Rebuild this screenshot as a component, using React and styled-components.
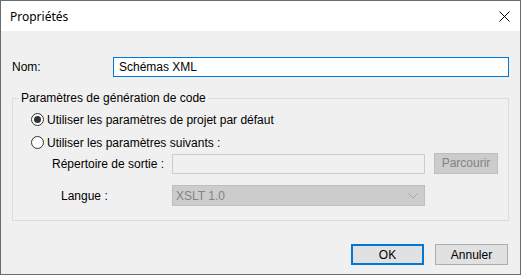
import React from 'react'
import styled, { createGlobalStyle } from 'styled-components'

const GlobalStyle = createGlobalStyle`
    html, body {
        margin: 0;
        padding: 0;
        background: #f0f0f0;
    }
    * {
        box-sizing: border-box;
    }
`

const Fenetre = styled.div`
    width: 521px;
    height: 275px;
    border: 1px solid #6b6b6b;
    background: #f0f0f0;
    display: flex;
    flex-direction: column;
    font-family: "Liberation Sans", Arial, sans-serif;
    font-size: 12px;
    color: #000;
`

const BarreTitre = styled.div`
    height: 30px;
    background: #fff;
    display: flex;
    align-items: center;
    justify-content: space-between;
    padding: 0 10px 0 9px;
    flex-shrink: 0;
`

const Titre = styled.span`
    font-family: "Noto Sans", "Open Sans", sans-serif;
    font-size: 12px;
`

const Corps = styled.div`
    flex: 1;
    display: flex;
    flex-direction: column;
    padding: 26px 11px 0 11px;
`

const LigneNom = styled.div`
    display: flex;
    align-items: center;
    height: 20px;
`

const Etiquette = styled.label`
    width: ${(p) => p.largeur || 101}px;
    padding-left: ${(p) => p.retrait || 0}px;
    flex-shrink: 0;
`

const Champ = styled.input`
    height: ${(p) => p.hauteur || 20}px;
    flex: ${(p) => (p.largeur ? 'none' : 1)};
    width: ${(p) => (p.largeur ? p.largeur + 'px' : 'auto')};
    border: 1px solid ${(p) => (p.actif ? '#0078d7' : '#cccccc')};
    background: ${(p) => (p.actif ? '#fff' : '#f0f0f0')};
    font: inherit;
    padding: 0 5px;
    outline: none;
    color: #000;
`

const Groupe = styled.fieldset`
    margin: 14px 0 0 0;
    padding: 0;
    border: 1px solid #dcdcdc;
    height: 130px;
`

const Legende = styled.legend`
    padding: 0 2px;
    margin-left: 6px;
`

const Contenu = styled.div`
    padding: 8px 0 0 18px;
`

const Choix = styled.label`
    display: flex;
    align-items: center;
    height: 13px;
    margin-top: ${(p) => p.haut || 0}px;
    gap: 3px;
`

const Rond = styled.span`
    width: 13px;
    height: 13px;
    border-radius: 50%;
    border: 1px solid #333;
    background: #fff;
    display: flex;
    align-items: center;
    justify-content: center;

    &::after {
        content: '';
        width: 7px;
        height: 7px;
        border-radius: 50%;
        background: ${(p) => (p.coche ? '#333' : 'transparent')};
    }
`

const LigneChamp = styled.div`
    display: flex;
    align-items: center;
    margin-top: ${(p) => p.haut || 0}px;
    height: ${(p) => p.hauteur || 20}px;
`

const Bouton = styled.button`
    width: 73px;
    height: 21px;
    font: inherit;
    padding: 0;
    background: ${(p) => (p.inactif ? '#cccccc' : '#e1e1e1')};
    color: ${(p) => (p.inactif ? '#838383' : '#000')};
    border: ${(p) => (p.defaut ? '2px solid #0078d7' : p.inactif ? '1px solid #bfbfbf' : '1px solid #adadad')};
`

const BoutonParcourir = styled(Bouton)`
    width: 64px;
    margin-left: 9px;
    margin-top: -2px;
`

const Liste = styled.div`
    width: 253px;
    height: 21px;
    background: #cccccc;
    border: 1px solid #bfbfbf;
    color: #838383;
    display: flex;
    align-items: center;
    justify-content: space-between;
    padding: 0 6px 0 3px;
`

const PiedBoutons = styled.div`
    display: flex;
    justify-content: flex-end;
    gap: 11px;
    margin-top: 23px;
    padding-right: 1px;
`

export default function App() {
    return (
        <>
            <GlobalStyle />
            <Fenetre>
                <BarreTitre>
                    <Titre>Propriétés</Titre>
                    <svg width="11" height="11" viewBox="0 0 11 11">
                        <path d="M0.5 0.5 L10.5 10.5 M10.5 0.5 L0.5 10.5" stroke="#000" strokeWidth="1" />
                    </svg>
                </BarreTitre>
                <Corps>
                    <LigneNom>
                        <Etiquette>Nom:</Etiquette>
                        <Champ actif defaultValue="Schémas XML" />
                    </LigneNom>
                    <Groupe>
                        <Legende>Paramètres de génération de code</Legende>
                        <Contenu>
                            <Choix haut={0}>
                                <Rond coche />
                                Utiliser les paramètres de projet par défaut
                            </Choix>
                            <Choix haut={10}>
                                <Rond />
                                Utiliser les paramètres suivants :
                            </Choix>
                            <LigneChamp haut={5}>
                                <Etiquette largeur={141} retrait={21}>Répertoire de sortie :</Etiquette>
                                <Champ largeur={253} disabled />
                                <BoutonParcourir inactif disabled>Parcourir</BoutonParcourir>
                            </LigneChamp>
                            <LigneChamp haut={11} hauteur={21}>
                                <Etiquette largeur={141} retrait={30}>Langue :</Etiquette>
                                <Liste>
                                    <span>XSLT 1.0</span>
                                    <svg width="10" height="6" viewBox="0 0 10 6">
                                        <path d="M0.5 0.5 L5 5 L9.5 0.5" stroke="#a8a8a8" strokeWidth="1" fill="none" />
                                    </svg>
                                </Liste>
                            </LigneChamp>
                        </Contenu>
                    </Groupe>
                    <PiedBoutons>
                        <Bouton defaut>OK</Bouton>
                        <Bouton>Annuler</Bouton>
                    </PiedBoutons>
                </Corps>
            </Fenetre>
        </>
    )
}
